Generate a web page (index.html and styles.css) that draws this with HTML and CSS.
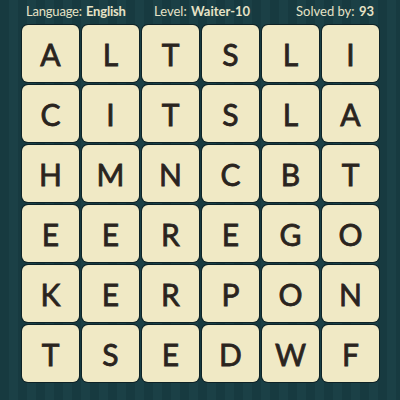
FILE: index.html
```html
<!DOCTYPE html>
<html>
<head>
<meta charset="utf-8">
<link rel="stylesheet" href="styles.css">
</head>
<body>
<div class="page">
  <div class="header">
    <span class="item lang">Language: <b>English</b></span>
    <span class="item level">Level: <b>Waiter-10</b></span>
    <span class="item solved">Solved by: <b>93</b></span>
  </div>
  <div class="grid">
    <div class="tile">A</div><div class="tile">L</div><div class="tile">T</div><div class="tile">S</div><div class="tile">L</div><div class="tile">I</div>
    <div class="tile">C</div><div class="tile">I</div><div class="tile">T</div><div class="tile">S</div><div class="tile">L</div><div class="tile">A</div>
    <div class="tile">H</div><div class="tile">M</div><div class="tile">N</div><div class="tile">C</div><div class="tile">B</div><div class="tile">T</div>
    <div class="tile">E</div><div class="tile">E</div><div class="tile">R</div><div class="tile">E</div><div class="tile">G</div><div class="tile">O</div>
    <div class="tile">K</div><div class="tile">E</div><div class="tile">R</div><div class="tile">P</div><div class="tile">O</div><div class="tile">N</div>
    <div class="tile">T</div><div class="tile">S</div><div class="tile">E</div><div class="tile">D</div><div class="tile">W</div><div class="tile">F</div>
  </div>
</div>
</body>
</html>
```
FILE: styles.css
```css
html, body {
  margin: 0;
  padding: 0;
}
body {
  width: 400px;
  height: 400px;
  overflow: hidden;
  background-color: #173a40;
  background-image: repeating-linear-gradient(90deg, #173a40 0px, #173a40 9px, #1b4046 9px, #1b4046 18px);
  font-family: Lato, "Open Sans", sans-serif;
}
.page {
  width: 400px;
  height: 400px;
}
.header {
  height: 25px;
  display: flex;
  align-items: center;
  color: #e6e2c6;
  font-size: 13px;
  padding: 0 26px 0 26px;
  box-sizing: border-box;
  position: relative;
  top: -2px;
}
.header b {
  font-weight: 700;
  margin-left: 1px;
}
.lang {
  width: 128px;
  letter-spacing: -0.2px;
}
.level {
  flex: 1;
}
.solved {
  text-align: right;
}
.grid {
  display: grid;
  grid-template-columns: repeat(6, 57px);
  grid-auto-rows: 57px;
  gap: 3px;
  padding-left: 22px;
}
.tile {
  background: #f0e9c5;
  border-radius: 6px;
  box-shadow: 0 0 0 1px #0e2226;
  display: flex;
  align-items: center;
  justify-content: center;
  color: #2a241e;
  font-size: 30px;
  font-weight: 400;
  -webkit-text-stroke: 0.8px #2a241e;
}
```
